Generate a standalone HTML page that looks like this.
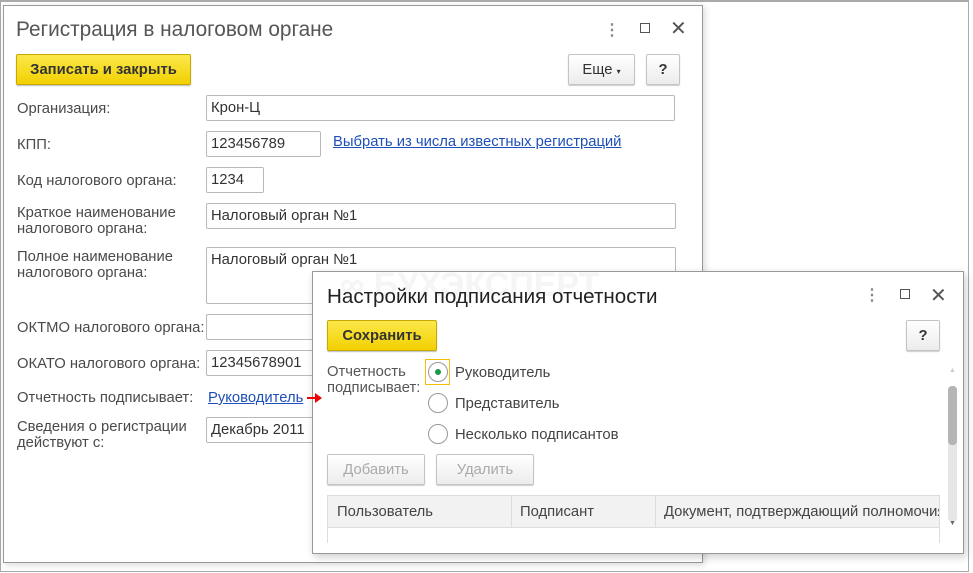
<!DOCTYPE html><html><head><meta charset="utf-8"><style>
*{box-sizing:border-box;margin:0;padding:0}
body{width:973px;height:573px;background:#fff;position:relative;overflow:hidden;font-family:"Liberation Sans",sans-serif;font-size:14.8px;color:#444}
.a{position:absolute}
.t{margin-top:1px}
.inp{position:absolute;border:1px solid #b8b8b8;border-radius:2px;background:#fff;padding:4px 4px 0;color:#333;font-size:14.8px;height:26px;white-space:nowrap;overflow:hidden}
.lbl{position:absolute;color:#4a4a4a;font-size:14.8px;line-height:16px;white-space:nowrap;margin-top:1px}
.btn{position:absolute;border:1px solid #c4c4c4;border-radius:2px;background:linear-gradient(#fff,#ececec);box-shadow:0 1px 1px #ccc;text-align:center;line-height:30px;color:#333}
.yb{position:absolute;border:1px solid #c9a800;border-radius:2px;background:linear-gradient(#fbe84a,#f2d000);font-weight:bold;text-align:center;line-height:30px;color:#333;box-shadow:0 1px 1px #bbb}
.rad{position:absolute;width:20px;height:20px;border:1px solid #999;border-radius:50%;background:#fff}
</style></head><body>
<div class="a" style="left:0;top:0;width:969px;height:572px;border:1px solid #aaa;border-top:2px solid #aaa"></div>
<div class="a" style="left:3px;top:5px;width:700px;height:558px;border:1px solid #999;background:#fff;box-shadow:2px 2px 6px rgba(0,0,0,.15)"></div>
<div class="a" style="left:16px;top:18px;font-size:20.8px;color:#555">Регистрация в налоговом органе</div>
<div class="a" style="left:604px;top:20px;font-size:16px;color:#888;font-weight:bold">⋮</div>
<div class="a" style="left:640px;top:23px;width:10px;height:10px;border:1px solid #555"></div>
<div class="a" style="left:670px;top:16px;font-size:20px;color:#555">✕</div>
<div class="yb" style="left:16px;top:54px;width:175px;height:31px">Записать и закрыть</div>
<div class="btn" style="left:568px;top:54px;width:67px;height:31px">Еще <span style="font-size:8px">▾</span></div>
<div class="btn" style="left:646px;top:54px;width:34px;height:31px;font-weight:bold">?</div>
<div class="lbl" style="left:17px;top:100px">Организация:</div>
<div class="inp" style="left:206px;top:95px;width:469px">Крон-Ц</div>
<div class="lbl" style="left:17px;top:136px">КПП:</div>
<div class="inp" style="left:206px;top:131px;width:115px">123456789</div>
<div class="a t" style="left:333px;top:133px;color:#1f4fb8;text-decoration:underline">Выбрать из числа известных регистраций</div>
<div class="lbl" style="left:17px;top:172px">Код налогового органа:</div>
<div class="inp" style="left:206px;top:167px;width:58px">1234</div>
<div class="lbl" style="left:17px;top:204px">Краткое наименование<br>налогового органа:</div>
<div class="inp" style="left:206px;top:203px;width:470px">Налоговый орган №1</div>
<div class="lbl" style="left:17px;top:248px">Полное наименование<br>налогового органа:</div>
<div class="inp" style="left:206px;top:247px;width:470px;height:57px">Налоговый орган №1</div>
<div class="lbl" style="left:17px;top:319px">ОКТМО налогового органа:</div>
<div class="inp" style="left:206px;top:314px;width:120px"></div>
<div class="lbl" style="left:17px;top:355px">ОКАТО налогового органа:</div>
<div class="inp" style="left:206px;top:350px;width:120px">12345678901</div>
<div class="lbl" style="left:17px;top:389px">Отчетность подписывает:</div>
<div class="a t" style="left:208px;top:389px;color:#1f4fb8;text-decoration:underline">Руководитель</div>
<div class="lbl" style="left:17px;top:418px">Сведения о регистрации<br>действуют с:</div>
<div class="inp" style="left:206px;top:417px;width:120px">Декабрь 2011</div>

<div class="a" style="left:312px;top:271px;width:652px;height:283px;border:1px solid #999;background:#fff;box-shadow:2px 3px 8px rgba(0,0,0,.2)"></div>
<div class="a" style="left:340px;top:266px;font-size:34px;font-weight:bold;color:#f5f5f5">∞ БУХЭКСПЕРТ</div>
<div class="a" style="left:307px;top:397px;width:10px;height:2px;background:#e00;z-index:5"></div>
<div class="a" style="left:315px;top:393px;border-left:7px solid #e00;border-top:5px solid transparent;border-bottom:5px solid transparent;z-index:5"></div>
<div class="a" style="left:327px;top:285px;font-size:20.6px;color:#222">Настройки подписания отчетности</div>
<div class="a" style="left:864px;top:285px;font-size:16px;color:#888;font-weight:bold">⋮</div>
<div class="a" style="left:900px;top:289px;width:10px;height:10px;border:1px solid #555"></div>
<div class="a" style="left:930px;top:283px;font-size:20px;color:#555">✕</div>
<div class="yb" style="left:327px;top:320px;width:110px;height:31px">Сохранить</div>
<div class="btn" style="left:906px;top:320px;width:34px;height:31px;font-weight:bold">?</div>
<div class="lbl" style="left:327px;top:363px;color:#555">Отчетность<br>подписывает:</div>
<div class="a" style="left:425px;top:359px;width:25px;height:26px;border:1px solid #f0c000"></div>
<div class="rad" style="left:428px;top:362px"><div class="a" style="left:6px;top:6px;width:6px;height:6px;border-radius:50%;background:#1a9a4a"></div></div>
<div class="a t" style="left:455px;top:364px;color:#444">Руководитель</div>
<div class="rad" style="left:428px;top:393px"></div>
<div class="a t" style="left:455px;top:395px;color:#444">Представитель</div>
<div class="rad" style="left:428px;top:424px"></div>
<div class="a t" style="left:455px;top:426px;color:#444">Несколько подписантов</div>
<div class="btn" style="left:327px;top:454px;width:98px;height:31px;color:#aaa">Добавить</div>
<div class="btn" style="left:436px;top:454px;width:98px;height:31px;color:#aaa">Удалить</div>
<div class="a" style="left:327px;top:495px;width:613px;height:48px;border-left:1px solid #ddd;border-right:1px solid #ddd;overflow:hidden">
<div class="a" style="left:0;top:0;width:613px;height:33px;background:#f2f2f2;border-bottom:1px solid #ddd;border-top:1px solid #ddd"></div>
<div class="a" style="left:183px;top:0;width:1px;height:33px;background:#ddd"></div>
<div class="a" style="left:327px;top:0;width:1px;height:33px;background:#ddd"></div>
<div class="a" style="left:9px;top:9px;color:#444;white-space:nowrap">Пользователь</div>
<div class="a" style="left:192px;top:9px;color:#444">Подписант</div>
<div class="a" style="left:336px;top:9px;color:#444;white-space:nowrap">Документ, подтверждающий полномочия</div>
</div>
<div class="a" style="left:948px;top:386px;width:9px;height:136px;background:#e6e6e6;border-radius:4px"></div>
<div class="a" style="left:948px;top:386px;width:9px;height:59px;background:#b5b5b5;border-radius:4px"></div>
<div class="a" style="left:949px;top:367px;font-size:7px;color:#ccc">▲</div>
<div class="a" style="left:949px;top:520px;font-size:7px;color:#666">▼</div>
</body></html>
